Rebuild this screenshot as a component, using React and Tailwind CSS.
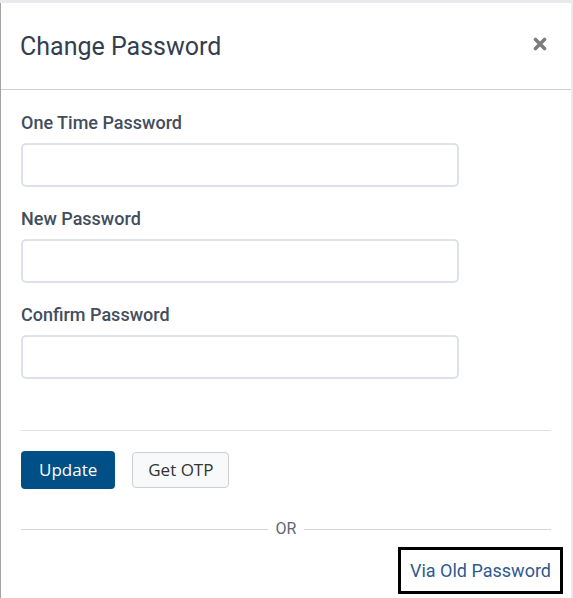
import React from 'react';

// Change password modal: OTP flow with a link back to the old-password flow.
function Field({ label }) {
  return (
    <div>
      <label className="mb-[8px] block text-[18px] font-medium leading-[24px] text-[#434d5c]">{label}</label>
      <input
        type="password"
        className="block h-[44px] w-[438px] rounded-[5px] border-2 border-[#dde1ec] bg-white px-3 outline-none"
      />
    </div>
  );
}

export default function App() {
  return (
    <div className="h-[598px] w-[573px] overflow-hidden bg-[#e9eaee] pt-[3px] font-['Roboto',sans-serif]">
      <div className="flex h-full w-[571px] flex-col border-l border-[#a3a3a3] bg-white">
        <div className="flex h-[87px] items-center justify-between border-b border-[#cfcfcf] pl-[19px] pr-[24px]">
          <h1 className="text-[25px] font-normal leading-none text-[#333e4e]">Change Password</h1>
          <button className="-mt-[5px] text-[#7d7d7d]" aria-label="Close">
            <svg width="14" height="14" viewBox="0 0 14 14">
              <path d="M2.5 2.5 11.5 11.5M11.5 2.5 2.5 11.5" stroke="currentColor" strokeWidth="3.6" strokeLinecap="round" />
            </svg>
          </button>
        </div>

        <div className="px-[20px] pt-[21px]">
          <div className="flex flex-col gap-[20px]">
            <Field label="One Time Password" />
            <Field label="New Password" />
            <Field label="Confirm Password" />
          </div>

          <div className="mt-[51px] border-t border-[#e2e2e2] pt-[20px]">
            <div className="flex items-center gap-[17px] font-['Open_Sans',sans-serif]">
              <button className="h-[38px] rounded-[4px] bg-[#005087] px-[18px] text-[17px] text-white">Update</button>
              <button className="h-[36px] rounded-[4px] border border-[#cfcfcf] bg-[#f8f9fa] px-[15px] text-[17px] text-[#333]">
                Get OTP
              </button>
            </div>

            <div className="mt-[32px] flex items-center gap-[8px]">
              <div className="h-px flex-1 bg-[#d4d4d4]" />
              <span className="text-[16px] leading-none text-[#5f6672]">OR</span>
              <div className="h-px flex-1 bg-[#d4d4d4]" />
            </div>

            <div className="-mr-[12px] mt-[10px] flex justify-end">
              <a href="#" className="border-[3px] border-black px-[9px] py-[8px] text-[18px] leading-[25px] text-[#2d5b8f]">
                Via Old Password
              </a>
            </div>
          </div>
        </div>
      </div>
    </div>
  );
}
